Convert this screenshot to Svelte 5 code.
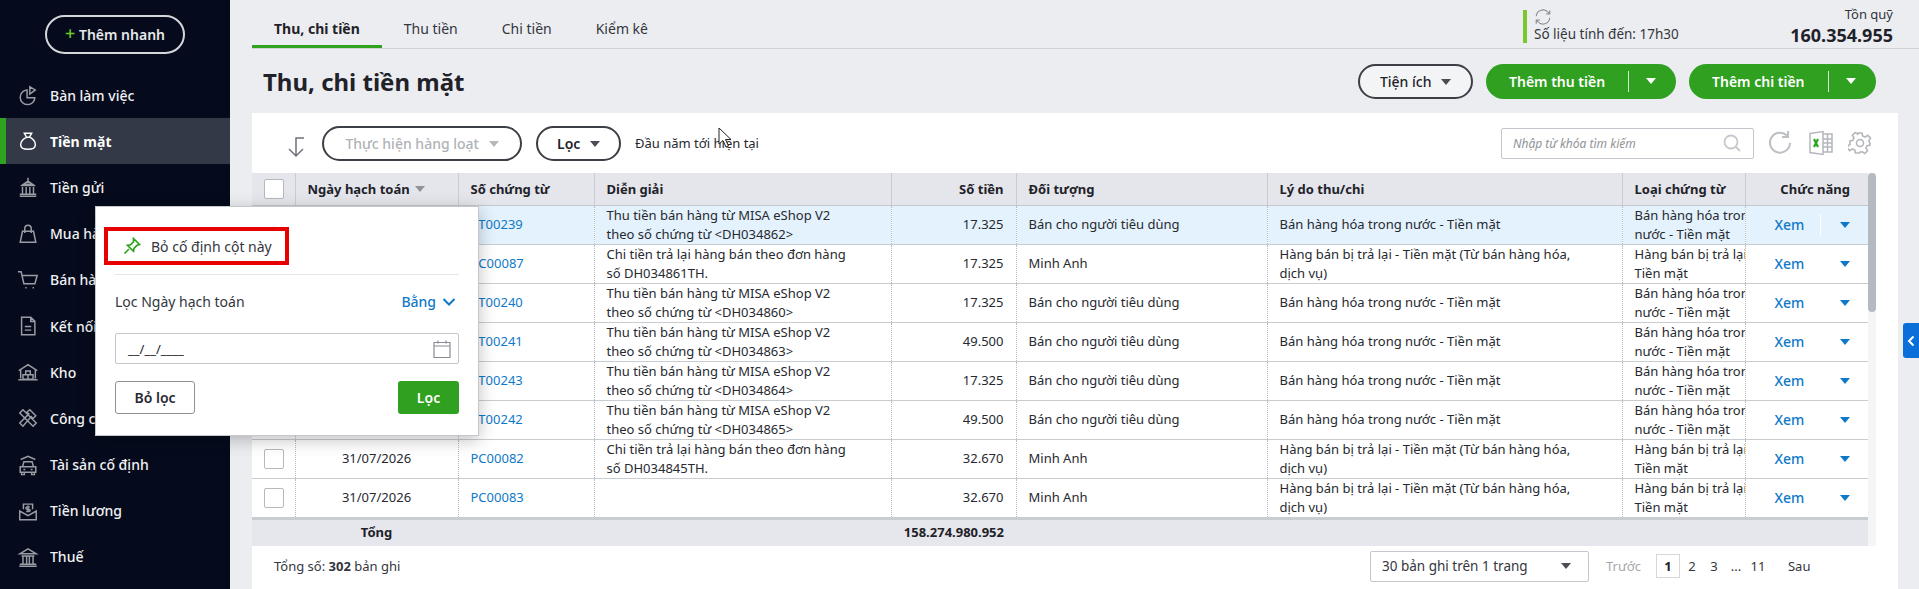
<script lang="ts">
	type Row = { no: string; desc: string[]; amount: string; who: string; reason: string[]; kind: string[] };

	const cashIn = ['Bán hàng hóa trong nước - Tiền mặt'];
	const refund = ['Hàng bán bị trả lại - Tiền mặt (Từ bán hàng hóa,', 'dịch vụ)'];
	const kindIn = ['Bán hàng hóa trong', 'nước - Tiền mặt'];
	const kindOut = ['Hàng bán bị trả lại -', 'Tiền mặt'];
	const retail = 'Bán cho người tiêu dùng';

	function eshop(code: string) {
		return ['Thu tiền bán hàng từ MISA eShop V2', `theo số chứng từ <${code}>`];
	}

	const rows: Row[] = [
		{ no: 'PT00239', desc: eshop('DH034862'), amount: '17.325', who: retail, reason: cashIn, kind: kindIn },
		{ no: 'PC00087', desc: ['Chi tiền trả lại hàng bán theo đơn hàng', 'số DH034861TH.'], amount: '17.325', who: 'Minh Anh', reason: refund, kind: kindOut },
		{ no: 'PT00240', desc: eshop('DH034860'), amount: '17.325', who: retail, reason: cashIn, kind: kindIn },
		{ no: 'PT00241', desc: eshop('DH034863'), amount: '49.500', who: retail, reason: cashIn, kind: kindIn },
		{ no: 'PT00243', desc: eshop('DH034864'), amount: '17.325', who: retail, reason: cashIn, kind: kindIn },
		{ no: 'PT00242', desc: eshop('DH034865'), amount: '49.500', who: retail, reason: cashIn, kind: kindIn },
		{ no: 'PC00082', desc: ['Chi tiền trả lại hàng bán theo đơn hàng', 'số DH034845TH.'], amount: '32.670', who: 'Minh Anh', reason: refund, kind: kindOut },
		{ no: 'PC00083', desc: [], amount: '32.670', who: 'Minh Anh', reason: refund, kind: kindOut }
	];

	const menu = [
		{ label: 'Bàn làm việc', d: 'M11 6.5a8 8 0 1 0 8.5 8.5H11zM14 3v8l6-4.5z' },
		{ label: 'Tiền mặt', d: 'M8 3.5h8l-2.5 4.5h-3zM10.5 8C6 10 4 13 4 16c0 3.500 2.500 5 8 5s8-1.500 8-5c0-3-2-6-5.500-8' },
		{ label: 'Tiền gửi', d: 'M12 2v3M7 9h10l-5-3.500zM4 10.500h16M6 12v7M10 12v7M14 12v7M18 12v7M3 20h18M3 22h18' },
		{ label: 'Mua hàng', d: 'M6 9 3.500 21h17L18 9zM8.500 11V6a3.500 3.500 0 0 1 7 0v5' },
		{ label: 'Bán hàng', d: 'M1 3h3.500l3 13h12L22 7H5.500M9 20.500h1.500M17 20.500h1.500' },
		{ label: 'Kết nối', d: 'M5 2.500h10l4.500 4.500v14.500H5zM15 2.500V7h4.500M8.500 12.500h7M8.500 16.500h7' },
		{ label: 'Kho', d: 'M2 10.500 12 4l10 6.500M4 10v9M20 10v9M1.500 20.500h21M9.500 11h5v4h-5zM6.500 15h5.500v5H6.500zM12 15h5.500v5H12z' },
		{ label: 'Công cụ', d: 'M3 6.500 6.500 3 21 17.500 17.500 21zM3 17.500 13 7.500l-2-2L14 3l6.500 6.500-3 3-2-2L6.500 21l-3.500-3.500z' },
		{ label: 'Tài sản cố định', d: 'M4 6 12 2.500 20 6M6 14l1.500-5.500h9L18 14M3.500 14h17v6h-17zM5 20v2.500h3V20M16 20v2.500h3V20M7 17h2M15 17h2' },
		{ label: 'Tiền lương', d: 'M7 10V4.500h10V10M3 12v9.500h18V12l-9 5zM12 6v7M14 7.500h-3a1.200 1.200 0 0 0 0 2.500h2a1.200 1.200 0 0 1 0 2.500h-3' },
		{ label: 'Thuế', d: 'M3 8.500 12 3l9 5.500zM5 11h14M6.500 11v8.500M10.500 11v8.500M13.500 11v8.500M17.500 11v8.500M3 20h18M2.500 22h19' }
	];

	const tabs = ['Thu, chi tiền', 'Thu tiền', 'Chi tiền', 'Kiểm kê'];
</script>

<div class="page">
	<aside class="sidebar">
		<button class="quick"><span class="plus">+</span> Thêm nhanh</button>
		<nav>
			{#each menu as item, i}
				<div class="nav-item" class:active={i === 1}>
					<svg width="22" height="22" viewBox="0 0 24 24" fill="none" stroke="currentColor" stroke-width="1.6">
						<path d={item.d} />
					</svg>
					<span>{item.label}</span>
				</div>
			{/each}
		</nav>
	</aside>

	<main>
		<header class="topbar">
			<div class="tabs">
				{#each tabs as tab, i}
					<div class="tab" class:current={i === 0}>{tab}</div>
				{/each}
			</div>
			<div class="sync">
				<svg width="18" height="18" viewBox="0 0 24 24" fill="none" stroke="#8a8d94" stroke-width="1.5">
					<path d="M3 11a9 9 0 0 1 16-5l2 2M21 3v5h-5M21 13a9 9 0 0 1-16 5l-2-2M3 21v-5h5" />
				</svg>
				<span>Số liệu tính đến: 17h30</span>
			</div>
			<div class="fund">
				<span>Tồn quỹ</span>
				<strong>160.354.955</strong>
			</div>
		</header>

		<div class="title-row">
			<h1>Thu, chi tiền mặt</h1>
			<button class="pill util">Tiện ích <i class="caret"></i></button>
			<button class="split">Thêm thu tiền <b></b><i class="caret white"></i></button>
			<button class="split second">Thêm chi tiền <b></b><i class="caret white"></i></button>
		</div>

		<section class="card">
			<div class="toolbar">
				<svg class="back" width="20" height="22" viewBox="0 0 20 22" fill="none" stroke="#6f7278" stroke-width="1.5">
					<path d="M18 2h-8v18M3 13l7 7 7-7" />
				</svg>
				<button class="pill bulk">Thực hiện hàng loạt <i class="caret light"></i></button>
				<button class="pill filter">Lọc <i class="caret"></i></button>
				<span class="range">Đầu năm tới hiện tại</span>
				<div class="search">
					<span>Nhập từ khóa tìm kiếm</span>
					<svg width="20" height="20" viewBox="0 0 20 20" fill="none" stroke="#c6c8cc" stroke-width="1.8">
						<circle cx="9" cy="9" r="6.500" /><path d="m14 14 4 4" />
					</svg>
				</div>
				<svg width="26" height="26" viewBox="0 0 26 26" fill="none" stroke="#bcbfc4" stroke-width="2">
					<path d="M22 13a10 10 0 1 1-3-7.500M20 1v6h-6" />
				</svg>
				<svg class="excel" width="26" height="26" viewBox="0 0 26 26" fill="none" stroke="#b4b7bc" stroke-width="1.5">
					<path d="M2 3.500 15 1.500v23L2 22.500zM15 4h9v18h-9M15 9h9M15 13h9M15 17h9M19.500 4v18" />
					<path d="m6 9 4 8M10 9l-4 8" stroke="#2fa31f" stroke-width="2.200" />
				</svg>
				<svg width="24" height="24" viewBox="0 0 24 24" fill="none" stroke="#b4b7bc" stroke-width="1.6">
					<circle cx="12" cy="12" r="3.500" />
					<path d="M10 2h4l.6 3 2.500 1.100 2.600-1.700 2.800 2.800-1.700 2.600L21.900 12.300l-.1 0 .2 1.700-3 .6-1.100 2.500 1.700 2.600-2.800 2.800-2.600-1.700-1.200.2-1 0-.6 1-4 0-.6-3-2.500-1.100-2.600 1.700-2.800-2.800 1.700-2.600L1.900 13.700 2 10l3-.6 1-2.500-1.700-2.600 2.800-2.800 2.600 1.700z" />
				</svg>
			</div>

			<div class="table-wrap">
				<table>
					<colgroup>
						<col style="width:43px" /><col style="width:163px" /><col style="width:136px" /><col style="width:297px" />
						<col style="width:125px" /><col style="width:251px" /><col style="width:355px" /><col style="width:123px" /><col style="width:123px" />
					</colgroup>
					<thead>
						<tr>
							<th class="center"><span class="check"></span></th>
							<th>Ngày hạch toán <i class="caret grey"></i></th>
							<th>Số chứng từ</th>
							<th>Diễn giải</th>
							<th class="num">Số tiền</th>
							<th>Đối tượng</th>
							<th>Lý do thu/chi</th>
							<th>Loại chứng từ</th>
							<th class="end">Chức năng</th>
						</tr>
					</thead>
					<tbody>
						{#each rows as row, i}
							<tr class:hover={i === 0}>
								<td class="center"><span class="check"></span></td>
								<td class="center">31/07/2026</td>
								<td class="link">{row.no}</td>
								<td>{#each row.desc as line}<div>{line}</div>{/each}</td>
								<td class="num">{row.amount}</td>
								<td>{row.who}</td>
								<td>{#each row.reason as line}<div class="nowrap">{line}</div>{/each}</td>
								<td class="clip">{#each row.kind as line}<div class="nowrap">{line}</div>{/each}</td>
								<td class="actions">
									<div><span class="xem" class:sep={i === 0}>Xem</span><i class="caret blue"></i></div>
								</td>
							</tr>
						{/each}
					</tbody>
					<tfoot>
						<tr>
							<td></td>
							<td class="center">Tổng</td>
							<td></td>
							<td></td>
							<td class="num total" colspan="1">158.274.980.952</td>
							<td></td><td></td><td></td><td></td>
						</tr>
					</tfoot>
				</table>
				<div class="scroll"><span></span></div>
			</div>

			<div class="pager">
				<span class="count">Tổng số: <b>302</b> bản ghi</span>
				<div class="size">30 bản ghi trên 1 trang <i class="caret dark"></i></div>
				<span class="prev">Trước</span>
				<span class="page-no on">1</span>
				<span class="page-no">2</span>
				<span class="page-no">3</span>
				<span class="page-no">...</span>
				<span class="page-no">11</span>
				<span class="next">Sau</span>
			</div>
		</section>
	</main>

	<div class="popup">
		<div class="pin-row">
			<svg width="18" height="18" viewBox="0 0 18 18" fill="none" stroke="#2fa31f" stroke-width="1.700">
				<path d="m10.500 1.500 6 6-2.500 .8-3 3-.5 3-6-6 3-.5 3-3zM6 12l-4.500 4.500" />
			</svg>
			<span>Bỏ cố định cột này</span>
		</div>
		<div class="rule"></div>
		<div class="cond">
			<span>Lọc Ngày hạch toán</span>
			<span class="eq">Bằng
				<svg width="14" height="10" viewBox="0 0 14 10" fill="none" stroke="#0f79c9" stroke-width="2"><path d="m1.500 2 5.500 5.500L12.500 2" /></svg>
			</span>
		</div>
		<div class="date">
			<span>__/__/____</span>
			<svg width="20" height="20" viewBox="0 0 20 20" fill="none" stroke="#8a8d94" stroke-width="1.200">
				<path d="M2 3.500h16v15H2zM2 7h16M6 1.500v3M14 1.500v3" />
			</svg>
		</div>
		<div class="popup-btns">
			<button class="clear">Bỏ lọc</button>
			<button class="apply">Lọc</button>
		</div>
	</div>

	<div class="side-tab">
		<svg width="8" height="12" viewBox="0 0 8 12" fill="none" stroke="#fff" stroke-width="2"><path d="M6.500 1.500 2 6l4.500 4.500" /></svg>
	</div>

	<svg class="cursor" width="14" height="22" viewBox="0 0 14 22">
		<path d="M1 1v16l4-3.500 3 6.500 2.500-1-3-6.500H13z" fill="#fff" stroke="#222" stroke-width="1" />
	</svg>
</div>

<style>
	:global(body) {
		margin: 0;
		font-family: 'Noto Sans', sans-serif;
		font-size: 13px;
		color: #1f2229;
		overflow: hidden;
	}

	.page {
		position: relative;
		display: flex;
		width: 1919px;
		height: 589px;
		overflow: hidden;
		background: #ecedf1;
	}

	.sidebar {
		width: 230px;
		flex: none;
		background: #050b1c;
		padding-top: 15px;
		box-sizing: border-box;
	}

	.quick {
		display: block;
		width: 140px;
		height: 39px;
		margin: 0 0 18px 45px;
		border: 2px solid #d5d6da;
		border-radius: 20px;
		background: transparent;
		color: #e8e9ec;
		font: 600 14px 'Noto Sans', sans-serif;
	}

	.plus {
		color: #6fc72e;
		font-size: 18px;
		font-weight: 500;
		line-height: 14px;
	}

	.nav-item {
		display: flex;
		align-items: center;
		height: 46.200px;
		padding-left: 17px;
		gap: 11px;
		color: #f1f2f4;
		font-size: 14px;
		font-weight: 500;
		box-sizing: border-box;
	}

	.nav-item svg {
		color: #9b9da4;
	}

	.nav-item.active {
		background: #333946;
		border-left: 6px solid #2fa31f;
		padding-left: 11px;
		color: #fff;
		font-weight: 700;
	}

	.nav-item.active svg {
		color: #fff;
	}

	main {
		flex: 1;
		min-width: 0;
		display: flex;
		flex-direction: column;
	}

	.topbar {
		display: flex;
		align-items: flex-start;
		height: 49px;
		margin-left: 22px;
		border-bottom: 1px solid #d0d2d7;
		box-sizing: border-box;
	}

	.tabs {
		display: flex;
		flex: 1;
		align-self: stretch;
	}

	.tab {
		padding: 0 22px;
		height: 48px;
		line-height: 58px;
		font-size: 14px;
		color: #33363d;
		box-sizing: border-box;
	}

	.tab.current {
		font-weight: 700;
		color: #1f2229;
		border-bottom: 3px solid #2fa31f;
	}

	.sync {
		display: flex;
		flex-direction: column;
		width: 220px;
		height: 33px;
		margin-top: 10px;
		padding-left: 7px;
		border-left: 4px solid #7ac72e;
		box-sizing: border-box;
		font-size: 13.500px;
		color: #33363d;
		line-height: 18px;
		justify-content: flex-end;
	}

	.sync svg {
		margin-top: -8px;
		margin-bottom: -1px;
		flex: none;
	}

	.fund {
		display: flex;
		flex-direction: column;
		align-items: flex-end;
		width: 150px;
		margin-right: 26px;
		padding-top: 5px;
		color: #33363d;
		line-height: 18px;
	}

	.fund strong {
		font-size: 18px;
		line-height: 24px;
		color: #1f2229;
	}

	.title-row {
		display: flex;
		align-items: center;
		height: 64px;
		padding: 0 43px 0 33px;
		gap: 13px;
	}

	h1 {
		flex: 1;
		margin: 0;
		font-size: 24px;
		font-weight: 700;
		color: #1f2229;
	}

	button {
		font-family: inherit;
		cursor: default;
	}

	.pill {
		height: 35px;
		border: 2px solid #3c3f46;
		border-radius: 18px;
		background: #fff;
		font-size: 14px;
		color: #1f2229;
		padding: 0;
		box-sizing: border-box;
	}

	.util {
		width: 115px;
		background: #f3f4f6;
		font-weight: 500;
	}

	.split {
		width: 190px;
		height: 35px;
		display: flex;
		align-items: center;
		padding: 0 0 0 23px;
		border: 0;
		border-radius: 18px;
		background: #2fa01f;
		color: #fff;
		font-size: 14px;
		font-weight: 600;
		box-sizing: border-box;
	}

	.split.second {
		width: 187px;
	}

	.split b {
		width: 1px;
		height: 21px;
		margin: 0 17px 0 23px;
		background: #d6ebd2;
	}

	.caret {
		display: inline-block;
		width: 0;
		height: 0;
		margin-left: 6px;
		border: 5px solid transparent;
		border-top: 6px solid #4a4d54;
		border-bottom: 0;
		vertical-align: 2px;
	}

	.caret.white { border-top-color: #fff; margin-left: 0; }
	.caret.light { border-top-color: #b5b7bb; }
	.caret.grey { border-top-color: #8f9297; margin-left: 2px; }
	.caret.blue { border-top-color: #0f79c9; margin-left: 0; }
	.caret.dark { border-top-color: #4a4d54; margin-left: 0; }

	.card {
		flex: 1;
		display: flex;
		flex-direction: column;
		margin: 0 21px 0 22px;
		background: #fff;
	}

	.toolbar {
		display: flex;
		align-items: center;
		height: 60px;
		padding: 0 26px 0 34px;
		gap: 14px;
		box-sizing: border-box;
	}

	.back {
		margin: 8px 0 0 0;
		flex: none;
	}

	.bulk {
		width: 200px;
		margin-left: 2px;
		color: #b0b2b6;
		font-weight: 500;
	}

	.filter {
		width: 85px;
		font-weight: 600;
	}

	.range {
		flex: 1;
		color: #26292f;
	}

	.search {
		display: flex;
		align-items: center;
		justify-content: space-between;
		width: 253px;
		height: 31px;
		padding: 0 11px;
		border: 1px solid #c3c6cc;
		border-radius: 2px;
		box-sizing: border-box;
		font-size: 12px;
		font-style: italic;
		color: #8f9297;
	}

	.excel {
		margin-left: 0;
	}

	.table-wrap {
		display: flex;
	}

	table {
		width: 1616px;
		border-collapse: collapse;
		table-layout: fixed;
	}

	th {
		height: 32px;
		padding: 0 12px;
		background: #e4e6eb;
		border-right: 1px solid #c9ccd1;
		border-bottom: 1px solid #c4c7cc;
		font-size: 13px;
		font-weight: 700;
		text-align: left;
		box-sizing: border-box;
		color: #1f2229;
	}

	th:last-child {
		border-right: 0;
	}

	td {
		height: 39px;
		padding: 0 12px;
		border-right: 1px dotted #b9bcc1;
		border-bottom: 1px solid #c9ccd1;
		line-height: 19px;
		font-size: 13px;
		box-sizing: border-box;
		color: #26292f;
		white-space: nowrap;
		overflow: hidden;
	}

	td:last-child {
		border-right: 0;
	}

	tbody tr:last-child td {
		border-bottom: 3px solid #c9ccd1;
	}

	tr.hover td {
		background: #e3f2fd;
	}

	.center {
		text-align: center;
	}

	.num {
		text-align: right;
	}

	.end {
		text-align: right;
		padding-right: 18px;
	}

	.link {
		color: #0f79c9;
	}

	.nowrap {
		white-space: nowrap;
	}

	.clip {
		padding-right: 0;
		overflow: hidden;
	}

	.check {
		display: inline-block;
		width: 20px;
		height: 20px;
		border: 1px solid #b5b8bd;
		border-radius: 2px;
		background: #fff;
		box-sizing: border-box;
		vertical-align: middle;
	}

	.actions {
		padding: 0;
	}

	.actions div {
		display: flex;
		align-items: center;
		padding-left: 29px;
	}

	.xem {
		width: 46px;
		margin-right: 19px;
		height: 22px;
		line-height: 22px;
		color: #0f79c9;
		font-weight: 500;
		font-size: 14px;
		box-sizing: border-box;
	}

	.xem.sep {
		border-right: 1px solid #fff;
	}

	tfoot td {
		height: 28px;
		padding: 0 12px;
		border: 0;
		background: #e6e7ec;
		font-weight: 700;
		color: #1f2229;
		overflow: visible;
	}

	.total {
		overflow: visible;
	}

	.scroll {
		flex: none;
		width: 8px;
		background: #f4f5f7;
	}

	.scroll span {
		display: block;
		height: 139px;
		background: #b5b9c0;
		border-radius: 4px;
	}

	.pager {
		display: flex;
		align-items: center;
		flex: 1;
		padding: 0 0 0 22px;
		margin-top: -3px;
		color: #33363d;
	}

	.count {
		width: 1096px;
	}

	.size {
		display: flex;
		align-items: center;
		justify-content: space-between;
		width: 219px;
		height: 31px;
		padding: 0 17px 0 11px;
		border: 1px solid #c3c6cc;
		border-radius: 2px;
		box-sizing: border-box;
		font-size: 13.500px;
	}

	.prev {
		margin: 0 15px 0 17px;
		color: #a5a7ac;
	}

	.page-no {
		min-width: 22px;
		text-align: center;
	}

	.page-no.on {
		width: 24px;
		height: 24px;
		line-height: 22px;
		margin-right: 1px;
		border: 1px solid #d5d7db;
		box-sizing: border-box;
		font-weight: 700;
		color: #1f2229;
	}

	.next {
		margin-left: 19px;
	}

	.popup {
		position: absolute;
		left: 95px;
		top: 206px;
		display: flex;
		flex-direction: column;
		width: 384px;
		height: 230px;
		padding: 20px 19px 0;
		background: #fff;
		border: 1px solid #c5c7cb;
		box-sizing: border-box;
		box-shadow: 0 4px 16px rgba(0, 0, 0, 0.25);
	}

	.pin-row {
		display: flex;
		align-items: center;
		gap: 10px;
		width: 185px;
		height: 38px;
		margin-left: -11px;
		padding-left: 15px;
		border: 4px solid #e60000;
		box-sizing: border-box;
		font-size: 14px;
		color: #33363d;
	}

	.rule {
		height: 1px;
		margin-top: 9px;
		background: #e4e6ea;
	}

	.cond {
		display: flex;
		justify-content: space-between;
		align-items: center;
		margin-top: 17px;
		font-size: 14px;
		line-height: 20px;
		color: #33363d;
	}

	.eq {
		display: flex;
		align-items: center;
		gap: 6px;
		padding-right: 3px;
		color: #0f79c9;
		font-weight: 500;
	}

	.date {
		display: flex;
		justify-content: space-between;
		align-items: center;
		height: 31px;
		margin-top: 21px;
		padding: 0 6px 0 12px;
		border: 1px solid #c3c6cc;
		border-radius: 2px;
		box-sizing: border-box;
	}

	.popup-btns {
		display: flex;
		justify-content: space-between;
		margin-top: 17px;
	}

	.clear,
	.apply {
		height: 33px;
		border-radius: 3px;
		font-size: 14px;
		font-weight: 600;
		box-sizing: border-box;
	}

	.clear {
		width: 80px;
		background: #fff;
		border: 1px solid #8f9297;
		color: #26292f;
	}

	.apply {
		width: 61px;
		background: #2fa01f;
		border: 0;
		color: #fff;
	}

	.side-tab {
		position: absolute;
		right: 0;
		top: 323px;
		display: flex;
		align-items: center;
		justify-content: center;
		width: 16px;
		height: 35px;
		background: #0a6fd8;
		border-radius: 3px 0 0 3px;
	}

	.cursor {
		position: absolute;
		left: 718px;
		top: 127px;
	}
</style>
